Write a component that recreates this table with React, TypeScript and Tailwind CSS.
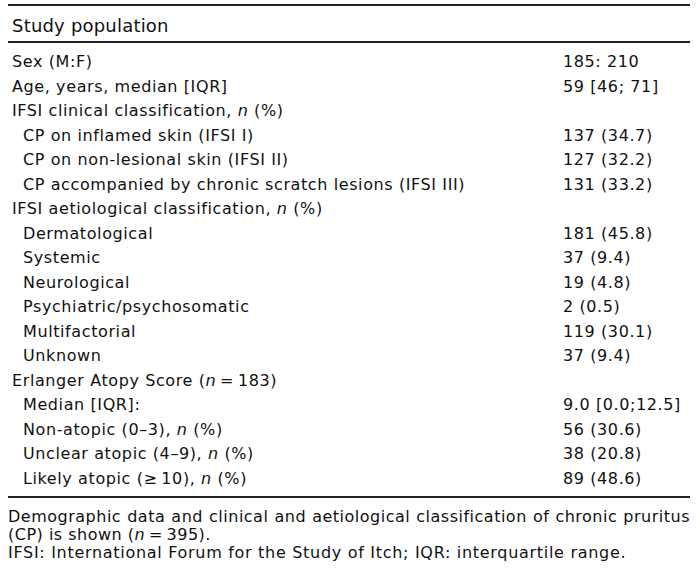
const rows: { label: React.ReactNode; value?: string; indent?: boolean }[] = [
  { label: "Sex (M:F)", value: "185: 210" },
  { label: "Age, years, median [IQR]", value: "59 [46; 71]" },
  { label: <>IFSI clinical classification, <i>n</i> (%)</> },
  { label: "CP on inflamed skin (IFSI I)", value: "137 (34.7)", indent: true },
  { label: "CP on non-lesional skin (IFSI II)", value: "127 (32.2)", indent: true },
  { label: "CP accompanied by chronic scratch lesions (IFSI III)", value: "131 (33.2)", indent: true },
  { label: <>IFSI aetiological classification, <i>n</i> (%)</> },
  { label: "Dermatological", value: "181 (45.8)", indent: true },
  { label: "Systemic", value: "37 (9.4)", indent: true },
  { label: "Neurological", value: "19 (4.8)", indent: true },
  { label: "Psychiatric/psychosomatic", value: "2 (0.5)", indent: true },
  { label: "Multifactorial", value: "119 (30.1)", indent: true },
  { label: "Unknown", value: "37 (9.4)", indent: true },
  { label: <>Erlanger Atopy Score (<i>n</i>{"\u2009=\u2009"}183)</> },
  { label: "Median [IQR]:", value: "9.0 [0.0;12.5]", indent: true },
  { label: <>Non-atopic (0–3), <i>n</i> (%)</>, value: "56 (30.6)", indent: true },
  { label: <>Unclear atopic (4–9), <i>n</i> (%)</>, value: "38 (20.8)", indent: true },
  { label: <>Likely atopic ({"≥\u200910"}), <i>n</i> (%)</>, value: "89 (48.6)", indent: true },
];

export default function App() {
  return (
    <div className="w-[700px] h-[573px] bg-white px-[8px] pt-[4px] text-[#111] font-['DejaVu_Sans',Verdana,sans-serif] text-[16px] tracking-[0.6px]">
      <div className="w-[682px]">
        {/* header */}
        <div className="border-t-2 border-b-2 border-[#222] h-[39px] flex items-center pl-[4px] pt-[3px] text-[18px] tracking-[0.2px]">
          Study population
        </div>

        {/* body */}
        <div className="pt-[7px] pb-[5px] border-b-2 border-[#222]">
          {rows.map((r, i) => (
            <div key={i} className="grid grid-cols-[551px_1fr] h-[24.5px] items-center pl-[4px]">
              <div className={r.indent ? "pl-[11px]" : ""}>{r.label}</div>
              <div>{r.value}</div>
            </div>
          ))}
        </div>

        {/* footnote */}
        <div className="pt-[10px] leading-[18px] tracking-[0.5px]">
          <p className="whitespace-nowrap text-justify [text-align-last:justify]">
            Demographic data and clinical and aetiological classification of chronic pruritus
          </p>
          <p>
            (CP) is shown (<i>n</i>
            {"\u2009=\u2009"}395).
          </p>
          <p className="tracking-[0.7px]">IFSI: International Forum for the Study of Itch; IQR: interquartile range.</p>
        </div>
      </div>
    </div>
  );
}
